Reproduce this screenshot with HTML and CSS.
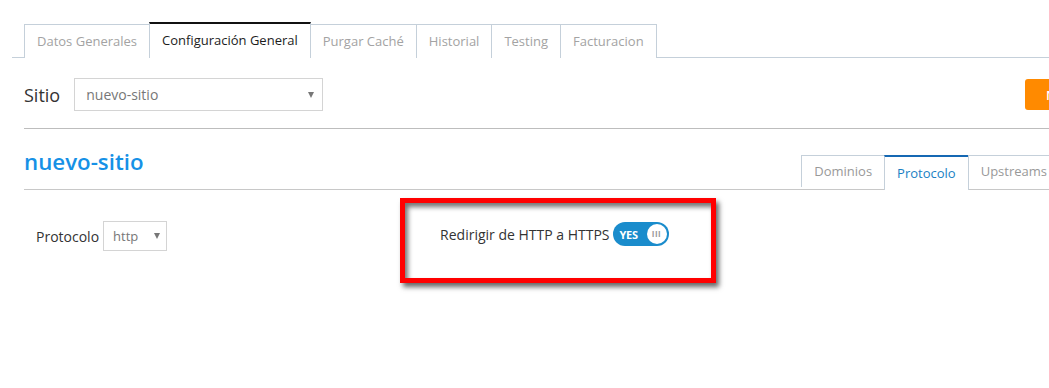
FILE: index.html
```html
<!DOCTYPE html>
<html lang="es">
<head>
<meta charset="UTF-8">
<title>Configuración General</title>
<link rel="stylesheet" href="styles.css">
</head>
<body>
<div class="page">
  <ul class="tabs">
    <li>Datos Generales</li>
    <li class="active">Configuración General</li>
    <li>Purgar Caché</li>
    <li>Historial</li>
    <li>Testing</li>
    <li>Facturacion</li>
  </ul>
  <div class="content">
    <div class="site-row">
      <label class="site-label">Sitio</label>
      <div class="select big"><span>nuevo-sitio</span><i class="caret"></i></div>
      <button class="btn-orange">Nuevo</button>
    </div>
    <div class="head-row">
      <h1 class="site-title">nuevo-sitio</h1>
      <ul class="subtabs">
        <li>Dominios</li>
        <li class="active">Protocolo</li>
        <li>Upstreams</li>
      </ul>
    </div>
    <div class="proto-row">
      <div class="field">
        <span class="field-label">Protocolo</span>
        <div class="select small"><span>http</span><i class="caret"></i></div>
      </div>
      <div class="field redirect">
        <span class="field-label">Redirigir de HTTP a HTTPS</span>
        <div class="switch"><span class="switch-on">YES</span><span class="knob">III</span></div>
      </div>
      <div class="highlight"></div>
    </div>
  </div>
</div>
</body>
</html>
```

FILE: styles.css
```css
*{margin:0;padding:0;box-sizing:border-box}
body{font-family:'Open Sans',sans-serif;background:#fff;color:#333;overflow:hidden;width:1049px;height:388px}
.page{padding:23px 0 0 12px}

.tabs{list-style:none;display:flex;padding-left:12px;border-bottom:1px solid #c5d0da;height:35px;align-items:flex-end}
.tabs li{height:34px;line-height:33px;padding:0 12px;font-size:13px;color:#a3a3a3;border:1px solid #c5d0da;border-bottom:none;margin-left:-1px;margin-bottom:-1px;background:#fff}
.tabs li:first-child{margin-left:0}
.tabs li.active{height:36px;color:#1c1c1c;border-top:2px solid #111;line-height:33px}

.content{padding-left:12px}
.site-row{display:flex;align-items:center;margin-top:20px;padding-bottom:17px;border-bottom:1px solid #bdbdbd}
.site-label{font-size:18px;color:#333;margin-right:14px}
.select{display:flex;align-items:center;justify-content:space-between;border:1px solid #d4d4d4;background:#fff;color:#777}
.select.big{width:249px;height:33px;padding:0 8px 0 11px;font-size:14px}
.caret{width:0;height:0;border-left:3px solid transparent;border-right:3px solid transparent;border-top:6px solid #777}
.btn-orange{margin-left:auto;margin-right:-40px;width:64px;height:31px;border:none;border-radius:3px;background:#ff8a00;color:#fff;font-family:'Open Sans',sans-serif;font-size:13px;font-weight:600;text-align:left;padding-left:21px}

.head-row{display:flex;align-items:flex-end;justify-content:space-between;border-bottom:1px solid #c8c8c8;margin-top:20px;height:41px}
.site-title{font-size:22.3px;font-weight:600;color:#1691e6;align-self:flex-start;line-height:26px}
.subtabs{list-style:none;display:flex;margin-right:-11px}
.subtabs li{height:32px;line-height:31px;padding:0 12px;font-size:13px;color:#999;border:1px solid #c5d0da;border-bottom:none;margin-left:-1px;margin-bottom:-1px;background:#fff}
.subtabs li.active{height:35px;line-height:33px;color:#1a7fc4;border-top:2px solid #1568b3}

.proto-row{position:relative;display:flex;align-items:center;padding:31px 0 0 12px}
.field{display:flex;align-items:center;font-size:14px}
.field-label{color:#333}
.select.small{width:64px;height:30px;margin-left:4px;padding:0 6px 0 9px;font-size:13px}
.redirect{margin-left:273px;margin-top:-4px}
.redirect .field-label{margin-right:3px}
.switch{display:flex;align-items:center;justify-content:space-between;width:56px;height:24px;border-radius:12px;background:#1a8ccc;padding:0 2px 0 7px}
.switch-on{color:#fff;font-size:11px;font-weight:700;letter-spacing:-0.3px}
.knob{width:20px;height:20px;border-radius:50%;background:#fff;color:#999;font-size:8px;font-weight:700;line-height:20px;text-align:center;letter-spacing:0.5px}
.highlight{position:absolute;left:376px;top:8px;width:316px;height:85px;border:5px solid #ff0000;box-shadow:3px 4px 5px rgba(0,0,0,0.6),inset 3px 4px 5px rgba(0,0,0,0.55)}
```
